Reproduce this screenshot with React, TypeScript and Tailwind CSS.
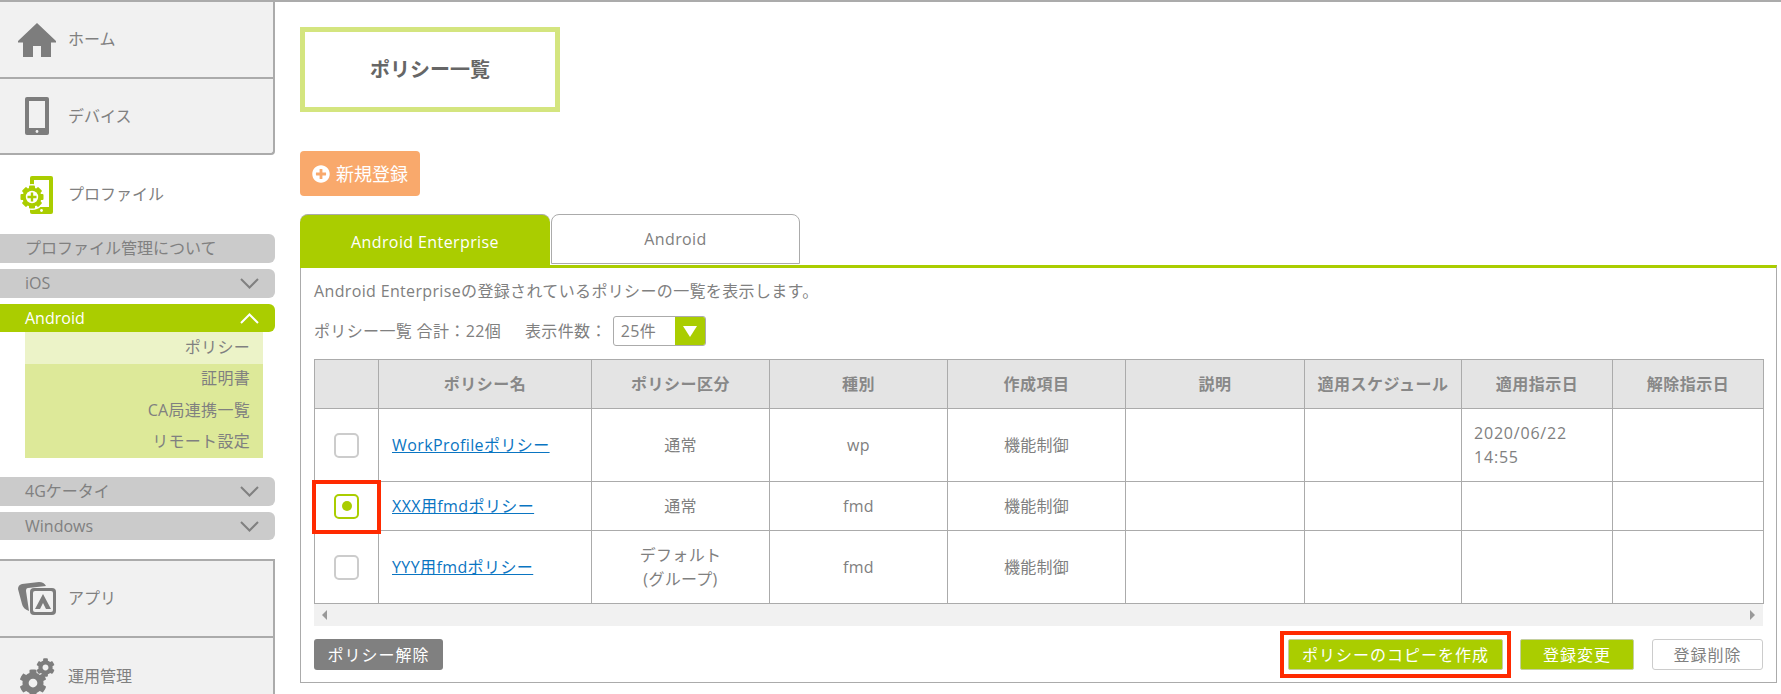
import { FaCog, FaPlusCircle } from 'react-icons/fa';

const font = { fontFamily: '"Open Sans", "Noto Sans CJK JP", sans-serif' };

function HomeIcon() {
  return (
    <svg viewBox="0 0 38 34" className="w-[38px] h-[34px]">
      <path d="M19 0 L38 18 L38 19.5 L33 19.5 L33 34 L23 34 L23 23 L15 23 L15 34 L5 34 L5 19.5 L0 19.5 L0 18 Z" fill="#7d7d7d" />
    </svg>
  );
}

function PhoneIcon() {
  return (
    <svg viewBox="0 0 24 38" className="w-6 h-[38px]">
      <rect width="24" height="38" rx="2" fill="#7d7d7d" />
      <rect x="4" y="4" width="16" height="27" fill="#f1f1f1" />
      <circle cx="12" cy="34.5" r="1.4" fill="#f1f1f1" />
    </svg>
  );
}

function ProfileIcon() {
  return (
    <svg viewBox="0 0 33 38" className="w-[33px] h-[38px]">
      <rect x="10" width="23" height="38" rx="2" fill="#aacd00" />
      <rect x="14" y="4" width="15" height="27" fill="#ffffff" />
      <circle cx="21.5" cy="34.5" r="1.4" fill="#ffffff" />
      <circle cx="12" cy="21" r="13" fill="#ffffff" />
      <g fill="#aacd00">
        <circle cx="12" cy="21" r="9.5" />
        {[0, 45, 90, 135].map((a) => (
          <rect key={a} x="9" y="9.5" width="6" height="23" rx="1" transform={`rotate(${a} 12 21)`} />
        ))}
      </g>
      <circle cx="12" cy="21" r="6.2" fill="#ffffff" />
      <path d="M10.8 16.5h2.4v3.3h3.3v2.4h-3.3v3.3h-2.4v-3.3H7.5v-2.4h3.3z" fill="#aacd00" />
    </svg>
  );
}

function AppsIcon() {
  return (
    <svg viewBox="0 0 38 33" className="w-[38px] h-[33px]">
      <path d="M4 2 L21 0 Q26 0 28 4 L10 6 Q8 6 8 9 L11 29 Q5 27 4 22 L0 7 Q0 3 4 2 Z" fill="#7d7d7d" />
      <rect x="12" y="6" width="26" height="27" rx="4" fill="#7d7d7d" />
      <rect x="15" y="9" width="20" height="21" rx="2" fill="#f1f1f1" />
      <path d="M25 12 L33 27 L28 27 L25 21 L22 27 L17 27 Z" fill="#7d7d7d" />
    </svg>
  );
}

function GearsIcon() {
  return (
    <div className="relative w-[36px] h-[38px]">
      <FaCog className="absolute left-0 top-[11px] w-[28px] h-[28px] text-[#7d7d7d]" />
      <FaCog className="absolute right-0 top-0 w-[19px] h-[19px] text-[#7d7d7d]" />
    </div>
  );
}

function Chevron({ up }: { up?: boolean }) {
  return (
    <svg viewBox="0 0 19 11" className="w-[19px] h-[11px]" fill="none" stroke="currentColor" strokeWidth="2">
      <polyline points={up ? '1,10 9.5,1.5 18,10' : '1,1 9.5,9.5 18,1'} />
    </svg>
  );
}

function NavItem({ icon, label, className }: { icon: React.ReactNode; label: string; className: string }) {
  return (
    <div className={`shrink-0 flex items-center bg-[#f1f1f1] border-r-2 border-[#ababab] ${className}`}>
      <div className="w-[68px] flex justify-center pl-[6px] shrink-0">{icon}</div>
      <span className="text-base text-[#808080] -mt-[1px]">{label}</span>
    </div>
  );
}

function Pill({ label, open, active, short }: { label: string; open?: boolean; active?: boolean; short?: boolean }) {
  return (
    <div
      className={`${short ? 'h-[28px]' : 'h-[29px]'} shrink-0 flex items-center justify-between pl-[25px] pr-4 rounded-r-md text-base ${
        active ? 'bg-[#aacd00] text-white' : 'bg-[#cbcbcb] text-[#808080]'
      }`}
    >
      <span className="-mt-[1px]">{label}</span>
      {open === undefined ? null : <Chevron up={open} />}
    </div>
  );
}

function Sidebar() {
  return (
    <aside className="w-[275px] shrink-0 flex flex-col">
      <NavItem icon={<HomeIcon />} label="ホーム" className="h-[77px] border-b-2" />
      <NavItem icon={<PhoneIcon />} label="デバイス" className="h-[76px] border-b-2 rounded-br-sm" />
      <div className="h-[79px] flex items-center shrink-0">
        <div className="w-[68px] flex justify-center pl-[5px] shrink-0">
          <ProfileIcon />
        </div>
        <span className="text-base text-[#808080] -mt-[1px]">プロファイル</span>
      </div>
      <div className="flex flex-col gap-[6px] shrink-0">
        <Pill label="プロファイル管理について" />
        <Pill label="iOS" open={false} />
        <Pill label="Android" open active short />
      </div>
      <div className="ml-[25px] w-[238px] h-[126px] shrink-0 bg-[#dde999] text-right text-base tracking-[0.3px] text-[#808080]">
        <div className="h-8 leading-[30px] pr-[13px] bg-[#ecf3c8]">ポリシー</div>
        <div className="h-[31px] leading-[29px] pr-[13px]">証明書</div>
        <div className="h-[32px] leading-[30px] pr-[13px]">CA局連携一覧</div>
        <div className="h-[31px] leading-[29px] pr-[13px]">リモート設定</div>
      </div>
      <div className="flex flex-col gap-[6px] mt-[19px] shrink-0">
        <Pill label="4Gケータイ" open={false} />
        <Pill label="Windows" open={false} short />
      </div>
      <div className="mt-[19px] shrink-0 border-t-2 border-[#ababab]">
        <NavItem icon={<AppsIcon />} label="アプリ" className="h-[77px] border-b-2" />
        <NavItem icon={<GearsIcon />} label="運用管理" className="h-[77px]" />
      </div>
    </aside>
  );
}

type Row = {
  name: string;
  kind: React.ReactNode;
  type: string;
  date?: React.ReactNode;
  height: string;
  selected?: boolean;
};

const rows: Row[] = [
  {
    name: 'WorkProfileポリシー',
    kind: '通常',
    type: 'wp',
    date: (
      <>
        2020/06/22
        <br />
        14:55
      </>
    ),
    height: 'h-[73px]',
  },
  { name: 'XXX用fmdポリシー', kind: '通常', type: 'fmd', height: 'h-[49px]', selected: true },
  {
    name: 'YYY用fmdポリシー',
    kind: (
      <>
        デフォルト
        <br />
        (グループ)
      </>
    ),
    type: 'fmd',
    height: 'h-[73px]',
  },
];

const headers = ['ポリシー名', 'ポリシー区分', '種別', '作成項目', '説明', '適用スケジュール', '適用指示日', '解除指示日'];

function PolicyTable() {
  return (
    <table className="w-full table-fixed border-collapse text-base tracking-[0.3px] text-[#808080]">
      <colgroup>
        <col className="w-[64px]" />
        <col className="w-[213px]" />
        <col className="w-[178px]" />
        <col className="w-[178px]" />
        <col className="w-[178px]" />
        <col className="w-[179px]" />
        <col className="w-[157px]" />
        <col className="w-[151px]" />
        <col className="w-[151px]" />
      </colgroup>
      <thead>
        <tr className="h-[49px] bg-[#e4e4e4]">
          <th className="border border-[#ababab]" />
          {headers.map((h) => (
            <th key={h} className="border border-[#ababab] font-bold tracking-[0.5px] text-[#888888] p-0">
              {h}
            </th>
          ))}
        </tr>
      </thead>
      <tbody>
        {rows.map((r) => (
          <tr key={r.name} className={r.height}>
            <td className="relative border border-[#ababab] p-0">
              <div
                className={`mx-auto w-[25px] h-[25px] rounded-[5px] border-[2px] flex items-center justify-center ${
                  r.selected ? 'border-[#aacd00]' : 'border-[#cccccc]'
                }`}
              >
                {r.selected && <div className="w-[10px] h-[10px] rounded-full bg-[#aacd00]" />}
              </div>
              {r.selected && <div className="absolute -left-[3px] -right-[3px] -top-[2px] -bottom-[4px] border-[4px] border-[#ff2a00]" />}
            </td>
            <td className="border border-[#ababab] pl-[13px]">
              <a className="text-[#0a75c2] underline tracking-[0.4px]">{r.name}</a>
            </td>
            <td className="border border-[#ababab] text-center leading-6">{r.kind}</td>
            <td className="border border-[#ababab] text-center">{r.type}</td>
            <td className="border border-[#ababab] text-center">機能制御</td>
            <td className="border border-[#ababab]" />
            <td className="border border-[#ababab]" />
            <td className="border border-[#ababab] pl-3 leading-6 tracking-[0.8px]">{r.date}</td>
            <td className="border border-[#ababab]" />
          </tr>
        ))}
      </tbody>
    </table>
  );
}

export default function App() {
  return (
    <div className="w-[1781px] h-[694px] overflow-hidden bg-white border-t-2 border-[#ababab] flex" style={font}>
      <Sidebar />
      <main className="flex-1 min-w-0 pl-[25px] pr-1 pt-[25px]">
        <div className="w-[260px] h-[85px] border-[5px] border-[#d4e57f] flex items-center justify-center text-xl font-bold text-[#666666]">
          ポリシー一覧
        </div>
        <button className="mt-[39px] w-[120px] h-[45px] rounded-sm bg-[#f9a96c] text-white text-lg flex items-center justify-center gap-[6px]">
          <FaPlusCircle className="w-[18px] h-[18px]" />
          新規登録
        </button>
        <div className="mt-[18px] flex h-[51px] items-start">
          <div className="w-[250px] h-[54px] shrink-0 rounded-t-lg bg-[#aacd00] border-t border-[#ababab] text-white text-base tracking-[0.4px] flex items-center justify-center relative">
            Android Enterprise
          </div>
          <div className="w-[249px] h-[50px] ml-[1px] rounded-t-lg border border-[#ababab] bg-white text-[#808080] text-base tracking-[0.4px] flex items-center justify-center">
            Android
          </div>
        </div>
        <section className="h-[418px] border border-t-[3px] border-[#ababab] border-t-[#aacd00] px-[13px] text-base text-[#808080]">
          <p className="mt-[11px] h-[24px] leading-6 tracking-[0.35px]">Android Enterpriseの登録されているポリシーの一覧を表示します。</p>
          <div className="mt-[13px] h-[30px] flex items-center tracking-[0.35px]">
            <span>ポリシー一覧 合計：22個</span>
            <span className="ml-6">表示件数：</span>
            <div className="ml-[6px] w-[93px] h-[30px] rounded-[3px] border border-[#ababab] flex overflow-hidden">
              <span className="flex-1 pl-[7px] leading-7">25件</span>
              <span className="w-[30px] bg-[#aacd00] flex items-center justify-center">
                <span className="w-0 h-0 border-l-[7px] border-r-[7px] border-t-[11px] border-l-transparent border-r-transparent border-t-white" />
              </span>
            </div>
          </div>
          <div className="mt-[13px]">
            <PolicyTable />
            <div className="h-[22px] bg-[#f1f1f1] flex items-center justify-between px-2">
              <span className="w-0 h-0 border-t-[5px] border-b-[5px] border-r-[5px] border-t-transparent border-b-transparent border-r-[#999999]" />
              <span className="w-0 h-0 border-t-[5px] border-b-[5px] border-l-[5px] border-t-transparent border-b-transparent border-l-[#999999]" />
            </div>
          </div>
          <div className="mt-[13px] flex items-center tracking-[1px]">
            <button className="w-[129px] h-[31px] rounded-[3px] bg-[#808080] text-white">ポリシー解除</button>
            <div className="flex-1" />
            <div className="relative">
              <button className="block w-[215px] h-[31px] rounded-[2px] bg-[#aacd00] border border-[#c4cfa0] text-white">ポリシーのコピーを作成</button>
              <div className="absolute -inset-x-[8px] -top-[8px] -bottom-[8px] border-[4px] border-[#ff2a00]" />
            </div>
            <button className="ml-[17px] w-[114px] h-[31px] rounded-[2px] bg-[#aacd00] border border-[#c4cfa0] text-white">登録変更</button>
            <button className="ml-[18px] w-[111px] h-[31px] rounded-[3px] bg-white border border-[#cccccc] text-[#808080]">登録削除</button>
          </div>
        </section>
      </main>
    </div>
  );
}
